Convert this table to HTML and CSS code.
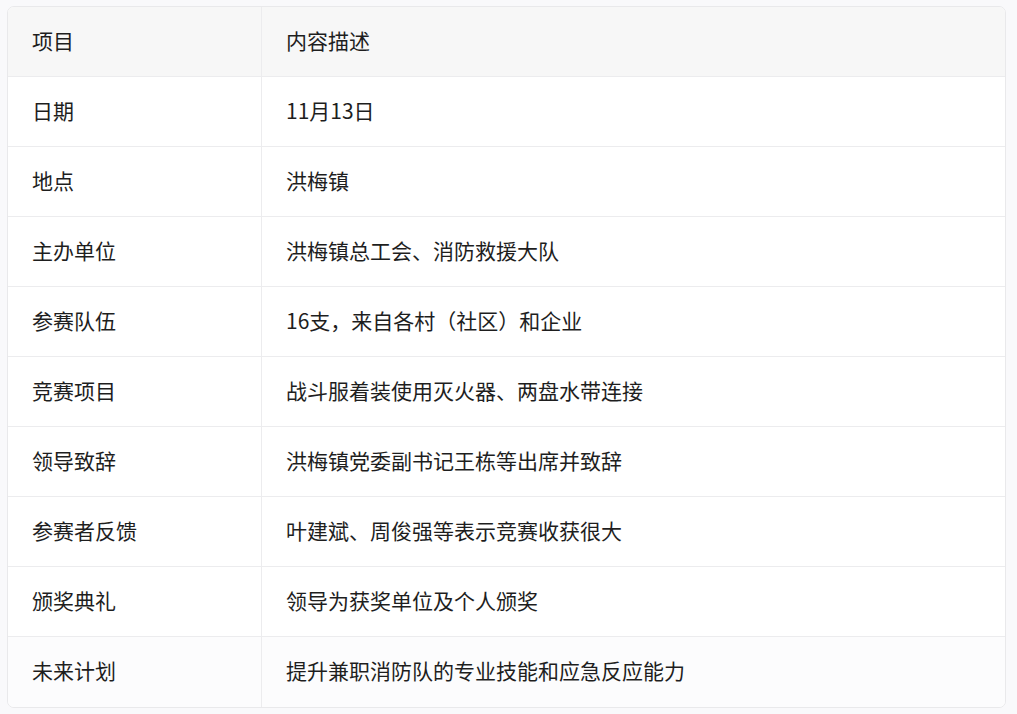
FILE: index.html
```html
<!DOCTYPE html>
<html lang="zh">
<head>
<meta charset="utf-8">
<link rel="stylesheet" href="styles.css">
<title>表格</title>
</head>
<body>
<div class="wrap">
<table class="info">
<thead>
<tr><th class="c1">项目</th><th>内容描述</th></tr>
</thead>
<tbody>
<tr><td class="c1">日期</td><td>11月13日</td></tr>
<tr><td class="c1">地点</td><td>洪梅镇</td></tr>
<tr><td class="c1">主办单位</td><td>洪梅镇总工会、消防救援大队</td></tr>
<tr><td class="c1">参赛队伍</td><td>16支，来自各村（社区）和企业</td></tr>
<tr><td class="c1">竞赛项目</td><td>战斗服着装使用灭火器、两盘水带连接</td></tr>
<tr><td class="c1">领导致辞</td><td>洪梅镇党委副书记王栋等出席并致辞</td></tr>
<tr><td class="c1">参赛者反馈</td><td>叶建斌、周俊强等表示竞赛收获很大</td></tr>
<tr><td class="c1">颁奖典礼</td><td>领导为获奖单位及个人颁奖</td></tr>
<tr class="last"><td class="c1">未来计划</td><td>提升兼职消防队的专业技能和应急反应能力</td></tr>
</tbody>
</table>
</div>
</body>
</html>
```
FILE: styles.css
```css
html, body {
  margin: 0;
  padding: 0;
  background: #f9f9fb;
}
body {
  font-family: "Noto Sans CJK SC", "Noto Sans", sans-serif;
  color: #1e1e1e;
}
.wrap {
  padding: 6px 11px 7px 7px;
}
.info {
  width: 100%;
  border-collapse: separate;
  border-spacing: 0;
  border: 1px solid #e9e9eb;
  border-radius: 7px;
  overflow: hidden;
  background: #fff;
  font-size: 21px;
}
.info th, .info td {
  height: 70px;
  padding: 0 24px 4px;
  text-align: left;
  font-weight: normal;
  border-bottom: 1px solid #ececee;
  vertical-align: middle;
  line-height: 24px;
  box-sizing: border-box;
}
.info tr.last td {
  border-bottom: none;
  background: #fcfcfd;
}
.info thead th {
  background: #f7f7f7;
}
.info .c1 {
  width: 254px;
  border-right: 1px solid #ececee;
}
```
